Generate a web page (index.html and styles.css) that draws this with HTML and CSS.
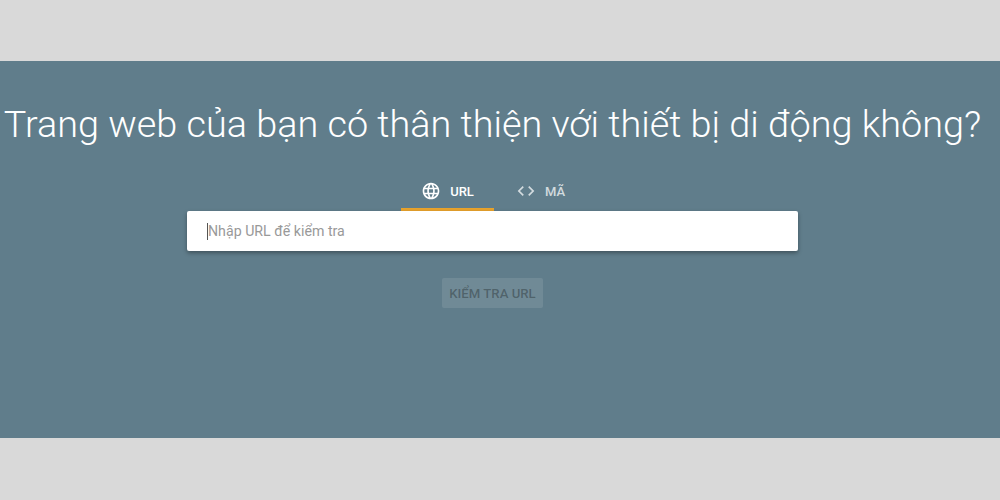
FILE: index.html
```html
<!DOCTYPE html>
<html lang="vi">
<head>
  <meta charset="UTF-8">
  <title>Kiểm tra tính thân thiện với thiết bị di động</title>
  <link rel="stylesheet" href="styles.css">
</head>
<body>
  <div class="band">
    <h1 class="title">Trang web của bạn có thân thiện với thiết bị di động không?</h1>

    <div class="tabs">
      <div class="tab active">
        <svg class="tab-icon" viewBox="0 0 24 24"><path d="M11.99 2C6.47 2 2 6.48 2 12s4.47 10 9.99 10C17.52 22 22 17.52 22 12S17.52 2 11.99 2zm6.93 6h-2.95c-.32-1.25-.78-2.45-1.38-3.56 1.84.63 3.37 1.91 4.33 3.56zM12 4.04c.83 1.2 1.48 2.53 1.91 3.96h-3.82c.43-1.43 1.08-2.76 1.91-3.96zM4.26 14C4.1 13.36 4 12.69 4 12s.1-1.36.26-2h3.38c-.08.66-.14 1.32-.14 2s.06 1.34.14 2H4.26zm.82 2h2.95c.32 1.25.78 2.45 1.38 3.56-1.84-.63-3.37-1.9-4.33-3.56zm2.95-8H5.08c.96-1.66 2.49-2.93 4.33-3.56C8.81 5.55 8.35 6.75 8.03 8zM12 19.96c-.83-1.2-1.48-2.53-1.91-3.96h3.82c-.43 1.43-1.08 2.76-1.91 3.96zM14.34 14H9.66c-.09-.66-.16-1.32-.16-2s.07-1.35.16-2h4.68c.09.65.16 1.32.16 2s-.07 1.34-.16 2zm.25 5.56c.6-1.11 1.06-2.31 1.38-3.56h2.95c-.96 1.65-2.49 2.93-4.33 3.56zM16.36 14c.08-.66.14-1.32.14-2s-.06-1.34-.14-2h3.38c.16.64.26 1.31.26 2s-.1 1.36-.26 2h-3.38z"/></svg>
        <span>URL</span>
      </div>
      <div class="tab">
        <svg class="tab-icon" viewBox="0 0 24 24"><path d="M9.4 16.6 4.8 12l4.6-4.6L8 6l-6 6 6 6 1.4-1.4zm5.2 0 4.6-4.6-4.6-4.6L16 6l6 6-6 6-1.4-1.4z"/></svg>
        <span>MÃ</span>
      </div>
    </div>

    <div class="search-box">
      <span class="caret"></span>
      <input class="search-input" type="text" placeholder="Nhập URL để kiểm tra">
    </div>

    <button class="check-button" disabled>KIỂM TRA URL</button>
  </div>
</body>
</html>
```

FILE: styles.css
```css
body {
  margin: 0;
  height: 500px;
  background-color: #d9d9d9;
  font-family: Roboto, sans-serif;
  overflow: hidden;
}

.band {
  margin-top: 61px;
  height: 377px;
  padding-right: 15px;
  background-color: #607d8b;
  display: flex;
  flex-direction: column;
  align-items: center;
}

.title {
  margin: 36px 0 0;
  font-size: 37.8px;
  line-height: 54px;
  font-weight: 300;
  color: #fff;
  white-space: nowrap;
}

.tabs {
  display: flex;
  margin-top: 23px;
  margin-left: 3px;
  height: 37px;
}

.tab {
  display: flex;
  align-items: center;
  justify-content: center;
  gap: 9px;
  width: 93px;
  box-sizing: border-box;
  padding-bottom: 3px;
  font-size: 13px;
  font-weight: 500;
  color: rgba(255, 255, 255, 0.72);
}

.tab.active {
  color: #fff;
  padding-bottom: 0;
  border-bottom: 3px solid #e8a32c;
}

.tab-icon {
  width: 20px;
  height: 20px;
  fill: currentColor;
}

.search-box {
  position: relative;
  width: 611px;
  height: 40px;
  background: #fff;
  border-radius: 2px;
  box-shadow: 0 2px 4px rgba(0, 0, 0, 0.35);
}

.caret {
  position: absolute;
  left: 20px;
  top: 12px;
  width: 1px;
  height: 17px;
  background: #555;
}

.search-input {
  width: 100%;
  height: 100%;
  box-sizing: border-box;
  border: none;
  outline: none;
  background: none;
  padding: 0 20px 0 21px;
  font-family: Roboto, sans-serif;
  font-size: 14.2px;
  color: #333;
}

.search-input::placeholder {
  color: #999;
}

.check-button {
  margin-top: 27px;
  width: 101px;
  height: 30px;
  padding: 0;
  border: none;
  border-radius: 2px;
  background: rgba(255, 255, 255, 0.1);
  color: rgba(0, 0, 0, 0.3);
  font-family: Roboto, sans-serif;
  font-size: 13.2px;
  font-weight: 500;
}
```
